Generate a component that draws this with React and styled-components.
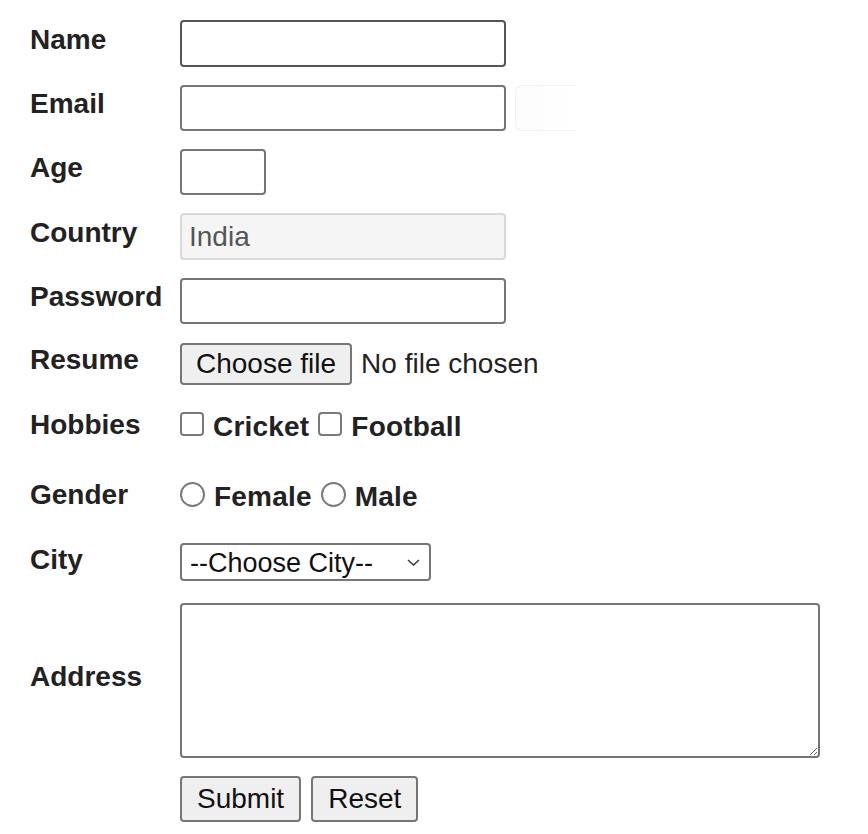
import styled, { createGlobalStyle } from "styled-components";

const GlobalStyle = createGlobalStyle`
  body {
    margin: 0;
    background: #fff;
    color: #222;
    font-family: "Liberation Sans", Arial, sans-serif;
  }
`;

const Form = styled.form`
  display: grid;
  grid-template-columns: 150px 1fr;
  row-gap: 18px;
  align-items: center;
  padding: 20px 30px 0 30px;
`;

const Label = styled.label`
  font-size: 28px;
  font-weight: bold;
  line-height: 33px;
  padding-bottom: 9px;
  color: #222;
`;

const Field = styled.div`
  display: flex;
  align-items: ${(p) => p.$align || "center"};
  min-height: ${(p) => p.$h || 0}px;
`;

const TextInput = styled.input`
  box-sizing: border-box;
  width: ${(p) => p.$w || 326}px;
  height: ${(p) => p.$h || 46}px;
  margin: 0;
  padding: 0 7px;
  border: 2px solid ${(p) => (p.readOnly ? "#d9d9d9" : "#767676")};
  border-radius: 4px;
  background: ${(p) => (p.readOnly ? "#f5f5f5" : "#fff")};
  color: ${(p) => (p.readOnly ? "#555" : "#222")};
  font-family: inherit;
  font-size: 28px;
  outline: none;
`;

const GhostBox = styled.span`
  display: block;
  box-sizing: border-box;
  width: 62px;
  height: 46px;
  margin-left: 9px;
  border: 1px solid #f1f1f1;
  border-right: none;
  border-radius: 6px 0 0 6px;
  background: linear-gradient(90deg, #fcfcfc, #fff);
`;

const GreyButton = styled.button`
  box-sizing: border-box;
  height: ${(p) => p.$h || 46}px;
  margin: 0;
  padding: 0 ${(p) => p.$px || 14}px;
  border: 2px solid #767676;
  border-radius: 4px;
  background: #efefef;
  color: #111;
  font-family: inherit;
  font-size: 28px;
`;

const FileStatus = styled.span`
  margin-left: 9px;
  font-size: 28px;
  line-height: 33px;
  color: #222;
`;

const Options = styled.div`
  display: flex;
  align-items: center;
  padding-bottom: 6px;
`;

const Box = styled.input`
  appearance: none;
  box-sizing: border-box;
  width: ${(p) => (p.type === "radio" ? 25 : 24)}px;
  height: ${(p) => (p.type === "radio" ? 25 : 24)}px;
  margin: 0 9px 4px 0;
  border: 2px solid #7a7a7a;
  border-radius: ${(p) => (p.type === "radio" ? "50%" : "4px")};
  background: #fff;
`;

const OptionText = styled.span`
  font-size: 28px;
  font-weight: bold;
  line-height: 33px;
  margin-right: ${(p) => p.$gap ?? 9}px;
  letter-spacing: 0.2px;
  color: #222;
`;

const SelectWrap = styled.div`
  position: relative;
  width: 251px;
  height: 38px;
`;

const Select = styled.select`
  appearance: none;
  box-sizing: border-box;
  width: 100%;
  height: 100%;
  margin: 0;
  padding: 2px 0 0 8px;
  border: 2px solid #767676;
  border-radius: 4px;
  background: #fff;
  color: #111;
  font-family: inherit;
  font-size: 27px;
`;

const Chevron = styled.svg`
  position: absolute;
  right: 11px;
  top: 16px;
  pointer-events: none;
`;

const TextArea = styled.textarea`
  box-sizing: border-box;
  display: block;
  width: 640px;
  height: 155px;
  margin: 0;
  border: 2px solid #767676;
  border-radius: 4px;
  font-family: inherit;
  font-size: 28px;
`;

const Actions = styled.div`
  display: flex;
  gap: 10px;
`;

export default function App() {
  return (
    <>
      <GlobalStyle />
      <Form onSubmit={(e) => e.preventDefault()}>
        <Label htmlFor="name">Name</Label>
        <Field>
          <TextInput id="name" type="text" $h={47} style={{ borderColor: "#555" }} />
        </Field>

        <Label htmlFor="email">Email</Label>
        <Field>
          <TextInput id="email" type="email" />
          <GhostBox />
        </Field>

        <Label htmlFor="age">Age</Label>
        <Field>
          <TextInput id="age" type="number" $w={86} />
        </Field>

        <Label htmlFor="country">Country</Label>
        <Field>
          <TextInput id="country" type="text" $h={47} readOnly defaultValue="India" />
        </Field>

        <Label htmlFor="password">Password</Label>
        <Field>
          <TextInput id="password" type="password" />
        </Field>

        <Label>Resume</Label>
        <Field $h={43}>
          <GreyButton type="button" $h={42}>Choose file</GreyButton>
          <FileStatus>No file chosen</FileStatus>
        </Field>

        <Label>Hobbies</Label>
        <Field $h={52}>
          <Options>
            <Box type="checkbox" name="hobby" value="cricket" />
            <OptionText>Cricket</OptionText>
            <Box type="checkbox" name="hobby" value="football" />
            <OptionText>Football</OptionText>
          </Options>
        </Field>

        <Label>Gender</Label>
        <Field $h={52}>
          <Options>
            <Box type="radio" name="gender" value="female" />
            <OptionText>Female</OptionText>
            <Box type="radio" name="gender" value="male" />
            <OptionText>Male</OptionText>
          </Options>
        </Field>

        <Label htmlFor="city">City</Label>
        <Field $h={42} $align="flex-start">
          <SelectWrap>
            <Select id="city" defaultValue="">
              <option value="">--Choose City--</option>
            </Select>
            <Chevron width="13" height="7" viewBox="0 0 13 7">
              <path d="M1 1l5.5 5 5.5-5" fill="none" stroke="#333" strokeWidth="1.4" />
            </Chevron>
          </SelectWrap>
        </Field>

        <Label htmlFor="address">Address</Label>
        <Field>
          <TextArea id="address" />
        </Field>

        <span />
        <Actions>
          <GreyButton type="submit" $px={15}>Submit</GreyButton>
          <GreyButton type="reset" $px={15}>Reset</GreyButton>
        </Actions>
      </Form>
    </>
  );
}
